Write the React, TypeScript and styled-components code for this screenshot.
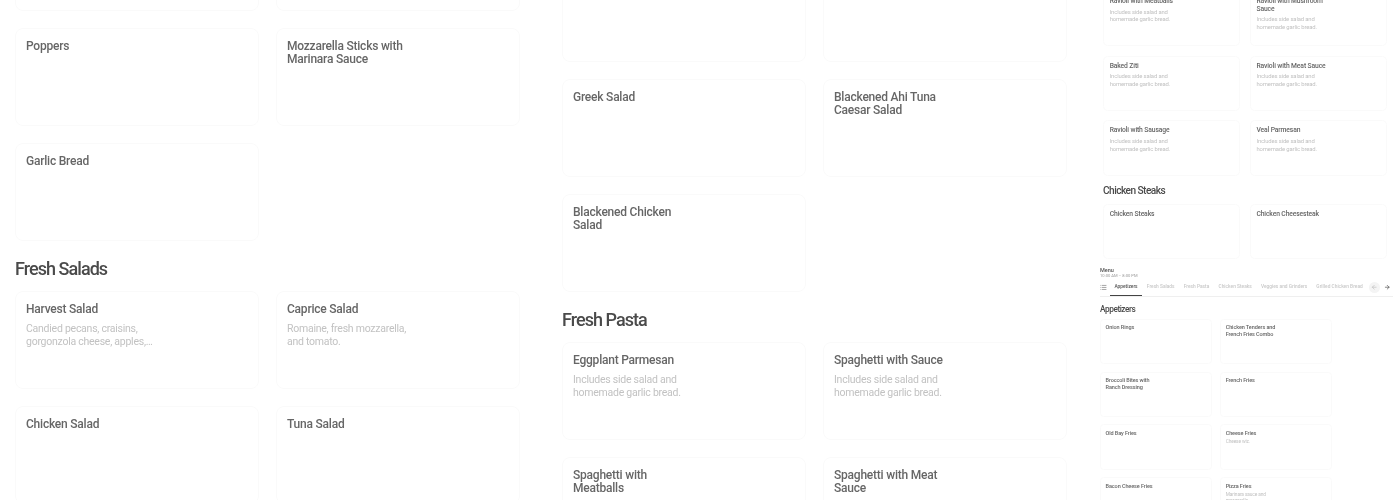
import { List, ArrowLeft, ArrowRight } from "lucide-react";
import styled, { createGlobalStyle } from "styled-components";

type Item = { name?: string; desc?: string };

const PASTA_DESC = "Includes side salad and homemade garlic bread.";

const appetizersTop: Item[] = [{}, {}, { name: "Poppers" }, { name: "Mozzarella Sticks with Marinara Sauce" }, { name: "Garlic Bread" }];
const salads: Item[] = [
	{ name: "Harvest Salad", desc: "Candied pecans, craisins, gorgonzola cheese, apples,…" },
	{ name: "Caprice Salad", desc: "Romaine, fresh mozzarella, and tomato." },
	{ name: "Chicken Salad" },
	{ name: "Tuna Salad" },
];
const saladsMore: Item[] = [{}, {}, { name: "Greek Salad" }, { name: "Blackened Ahi Tuna Caesar Salad" }, { name: "Blackened Chicken Salad" }];
const pasta: Item[] = [
	{ name: "Eggplant Parmesan", desc: PASTA_DESC },
	{ name: "Spaghetti with Sauce", desc: PASTA_DESC },
	{ name: "Spaghetti with Meatballs" },
	{ name: "Spaghetti with Meat Sauce" },
];
const pastaMore: Item[] = [
	{ name: "Ravioli with Meatballs", desc: PASTA_DESC },
	{ name: "Ravioli with Mushroom Sauce", desc: PASTA_DESC },
	{ name: "Baked Ziti", desc: PASTA_DESC },
	{ name: "Ravioli with Meat Sauce", desc: PASTA_DESC },
	{ name: "Ravioli with Sausage", desc: PASTA_DESC },
	{ name: "Veal Parmesan", desc: PASTA_DESC },
];
const steaks: Item[] = [{ name: "Chicken Steaks" }, { name: "Chicken Cheesesteak" }];
const appetizers: Item[] = [
	{ name: "Onion Rings" },
	{ name: "Chicken Tenders and French Fries Combo" },
	{ name: "Broccoli Bites with Ranch Dressing" },
	{ name: "French Fries" },
	{ name: "Old Bay Fries" },
	{ name: "Cheese Fries", desc: "Cheese wiz." },
	{ name: "Bacon Cheese Fries" },
	{ name: "Pizza Fries", desc: "Marinara sauce and mozzarella." },
];
const tabs = ["Appetizers", "Fresh Salads", "Fresh Pasta", "Chicken Steaks", "Veggies and Grinders", "Grilled Chicken Bread"];

function CardGrid({ items }: { items: Item[] }) {
	return (
		<Grid>
			{items.map((item, i) => (
				<Card key={i}>
					{item.name && <CardTitle>{item.name}</CardTitle>}
					{item.desc && <CardDesc>{item.desc}</CardDesc>}
				</Card>
			))}
		</Grid>
	);
}

export default function App() {
	return (
		<>
			<GlobalStyle />
			<Page>
				<Strip>
					<Sheet $top={-87}>
						<CardGrid items={appetizersTop} />
						<SectionTitle>Fresh Salads</SectionTitle>
						<CardGrid items={salads} />
					</Sheet>
				</Strip>
				<Strip>
					<Sheet $top={-36}>
						<CardGrid items={saladsMore} />
						<SectionTitle>Fresh Pasta</SectionTitle>
						<CardGrid items={pasta} />
					</Sheet>
				</Strip>
				<SideStack>
					<SideTop>
						<Sheet $top={-16} $zoom={0.5625}>
							<CardGrid items={pastaMore} />
							<SectionTitle>Chicken Steaks</SectionTitle>
							<CardGrid items={steaks} />
						</Sheet>
					</SideTop>
					<SideBottom>
						<Sheet $top={0} $zoom={0.46}>
							<MenuName>Menu</MenuName>
							<MenuHours>10:00 AM – 8:00 PM</MenuHours>
							<TabBar>
								<ListButton>
									<List size={15} strokeWidth={2} />
								</ListButton>
								{tabs.map((tab, i) => (
									<Tab key={tab} $active={i === 0}>
										{tab}
									</Tab>
								))}
								<RoundButton $muted>
									<ArrowLeft size={14} strokeWidth={2.4} />
								</RoundButton>
								<RoundButton>
									<ArrowRight size={14} strokeWidth={2.4} />
								</RoundButton>
							</TabBar>
							<MenuSectionTitle>Appetizers</MenuSectionTitle>
							<CardGrid items={appetizers} />
						</Sheet>
					</SideBottom>
				</SideStack>
			</Page>
		</>
	);
}

const GlobalStyle = createGlobalStyle`
	html, body {
		margin: 0;
		padding: 0;
		background: #ffffff;
	}
	body {
		font-family: "Roboto", "Liberation Sans", sans-serif;
	}
`;
const Page = styled.div`
	display: flex;
	width: 1400px;
	height: 500px;
	overflow: hidden;
	padding-left: 15px;
	box-sizing: border-box;
	filter: blur(0.25px);
`;
const Strip = styled.div`
	flex: 0 0 505px;
	height: 500px;
	overflow: hidden;
	margin-right: 42px;
`;
const Sheet = styled.div<{ $top: number; $zoom?: number }>`
	width: 505px;
	margin-top: ${(p) => p.$top}px;
	zoom: ${(p) => p.$zoom ?? 1};
`;
const SideStack = styled.div`
	display: flex;
	flex-direction: column;
	flex: 0 0 300px;
	margin-left: -9px;
	height: 500px;
	filter: blur(0.3px);
`;
const SideTop = styled.div`
	height: 262px;
	overflow: hidden;
	margin-left: 3px;
`;
const SideBottom = styled.div`
	height: 238px;
	overflow: hidden;
`;
const Grid = styled.div`
	display: grid;
	grid-template-columns: 244px 244px;
	column-gap: 17px;
	row-gap: 17px;
`;
const Card = styled.div`
	height: 98px;
	padding: 10.5px 10px 0;
	box-sizing: border-box;
	border: 1px solid #fafafa;
	border-radius: 8px;
`;
const CardTitle = styled.div`
	max-width: 126px;
	font-size: 12px;
	line-height: 13.5px;
	font-weight: 500;
	letter-spacing: -0.22px;
	color: #666666;
`;
const CardDesc = styled.div`
	max-width: 128px;
	margin-top: 5.5px;
	font-size: 10.5px;
	line-height: 13.5px;
	letter-spacing: -0.25px;
	color: #c2c2c2;
`;
const SectionTitle = styled.h2`
	margin: 17px 0 11px;
	font-size: 18px;
	line-height: 22px;
	font-weight: 500;
	letter-spacing: -0.95px;
	color: #4a4a4a;
`;
const MenuSectionTitle = styled(SectionTitle)`
	margin-top: 16px;
	margin-bottom: 10px;
`;
const MenuName = styled.div`
	margin-top: 10px;
	font-size: 12px;
	line-height: 14px;
	font-weight: 500;
	color: #555555;
`;
const MenuHours = styled.div`
	font-size: 9px;
	line-height: 13px;
	color: #999999;
`;
const TabBar = styled.div`
	display: flex;
	align-items: center;
	width: 637px;
	height: 36px;
	border-bottom: 1px solid #efefef;
`;
const ListButton = styled.div`
	display: flex;
	width: 22px;
	color: #666666;
`;
const Tab = styled.div<{ $active?: boolean }>`
	display: flex;
	align-items: center;
	height: 36px;
	padding: 0 10px;
	box-sizing: border-box;
	font-size: 10.5px;
	font-weight: 500;
	white-space: nowrap;
	color: ${(p) => (p.$active ? "#555555" : "#c8c8c8")};
	border-bottom: 2px solid ${(p) => (p.$active ? "#444444" : "transparent")};
`;
const RoundButton = styled.div<{ $muted?: boolean }>`
	display: flex;
	align-items: center;
	justify-content: center;
	flex: 0 0 24px;
	height: 24px;
	margin-left: 4px;
	border-radius: 50%;
	background: ${(p) => (p.$muted ? "#f4f4f4" : "transparent")};
	color: ${(p) => (p.$muted ? "#bbbbbb" : "#444444")};
`;
